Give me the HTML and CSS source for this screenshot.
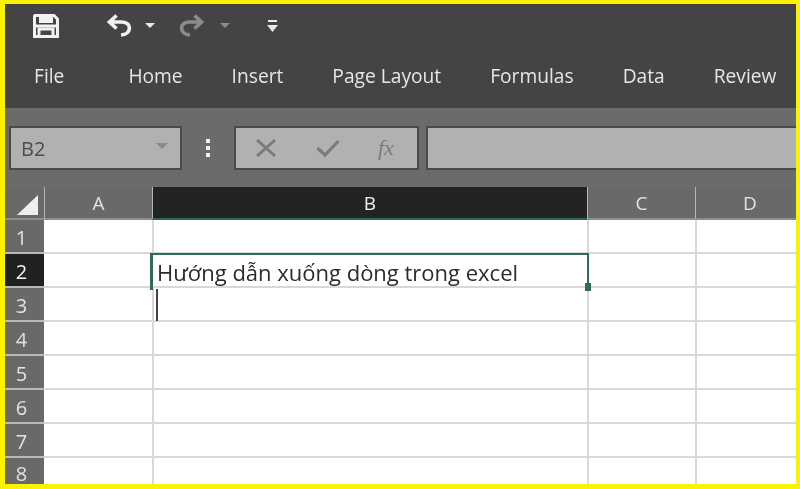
FILE: index.html
```html
<!DOCTYPE html>
<html lang="vi">
<head>
<meta charset="utf-8">
<title>Excel</title>
<link rel="stylesheet" href="styles.css">
</head>
<body>
<div class="frame">
  <header class="ribbon">
    <div class="qat">
      <svg class="ico-save" width="26" height="24" viewBox="0 0 26 24"><path d="M2 1.500H21L24.500 5V22.500H1.500V2Z" fill="none" stroke="#f2f2f2" stroke-width="3"/><rect x="6" y="2" width="14" height="7" fill="#f2f2f2"/><path d="M6 22V15H20V22" fill="none" stroke="#f2f2f2" stroke-width="3"/><rect x="2" y="10.500" width="22" height="3" fill="#f2f2f2"/></svg>
      <svg class="ico-undo" width="25" height="23" viewBox="0 0 25 23"><path d="M9.500 1.500L2.500 8L9.500 14.500M3 8H15C25.500 8 24.500 21 14 21" fill="none" stroke="#f0f0f0" stroke-width="3.600"/></svg>
      <span class="drop drop-on"></span>
      <svg class="ico-redo" width="25" height="23" viewBox="0 0 25 23"><path d="M15.500 1.500L22.500 8L15.500 14.500M22 8H10C-0.500 8 0.500 21 11 21" fill="none" stroke="#8b8b8b" stroke-width="3.600"/></svg>
      <span class="drop drop-off"></span>
      <svg class="ico-more" width="11" height="12" viewBox="0 0 11 12"><rect x="1" y="0" width="9" height="2" fill="#e8e8e8"/><path d="M0 5H11L5.500 12Z" fill="#e8e8e8"/></svg>
    </div>
    <nav class="tabs">
      <span class="tab tab-file">File</span>
      <span class="tab">Home</span>
      <span class="tab">Insert</span>
      <span class="tab">Page Layout</span>
      <span class="tab">Formulas</span>
      <span class="tab">Data</span>
      <span class="tab">Review</span>
    </nav>
  </header>
  <section class="fbar">
    <div class="namebox"><span>B2</span><i class="name-drop"></i></div>
    <div class="grip"><i></i><i></i><i></i></div>
    <div class="fbtns">
      <svg width="22" height="18" viewBox="0 0 22 18"><path d="M2 1L20 17M20 1L2 17" stroke="#7b7b7b" stroke-width="3" fill="none"/></svg>
      <svg width="24" height="18" viewBox="0 0 24 18"><path d="M1.500 9L9 16L22.500 2" stroke="#7b7b7b" stroke-width="3.200" fill="none"/></svg>
      <span class="fx">fx</span>
    </div>
    <div class="finput"></div>
  </section>
  <section class="sheet">
    <div class="ch corner"><svg width="22" height="21" viewBox="0 0 22 21"><path d="M21 0V20H0Z" fill="#efefef"/></svg></div>
    <div class="ch">A</div>
    <div class="ch ch-on">B</div>
    <div class="ch">C</div>
    <div class="ch ch-last">D</div>

    <div class="rh">1</div><div class="c"></div><div class="c"></div><div class="c"></div><div class="c"></div>
    <div class="rh rh-on">2</div><div class="c"></div><div class="c c-sel">Hướng dẫn xuống dòng trong excel<i class="handle"></i></div><div class="c"></div><div class="c"></div>
    <div class="rh">3</div><div class="c"></div><div class="c"><i class="caret"></i></div><div class="c"></div><div class="c"></div>
    <div class="rh">4</div><div class="c"></div><div class="c"></div><div class="c"></div><div class="c"></div>
    <div class="rh">5</div><div class="c"></div><div class="c"></div><div class="c"></div><div class="c"></div>
    <div class="rh">6</div><div class="c"></div><div class="c"></div><div class="c"></div><div class="c"></div>
    <div class="rh">7</div><div class="c"></div><div class="c"></div><div class="c"></div><div class="c"></div>
    <div class="rh rh-cut"><span>8</span></div><div class="c"></div><div class="c"></div><div class="c"></div><div class="c"></div>
  </section>
</div>
</body>
</html>
```
FILE: styles.css
```css
* { box-sizing: border-box; }
html, body { margin: 0; height: 100%; }
body { background: #fff; overflow: hidden; }

.frame {
  width: 800px;
  height: 489px;
  border-style: solid;
  border-color: #fbf200;
  border-width: 4px 4px 5px 5px;
  display: flex;
  flex-direction: column;
  overflow: hidden;
  font-family: "Open Sans", "Noto Sans", sans-serif;
  filter: blur(0.5px);
}

/* ribbon */
.ribbon {
  height: 104px;
  flex: none;
  background: #444;
  display: flex;
  flex-direction: column;
}
.qat {
  height: 42px;
  padding: 10px 0 0 28px;
  display: flex;
  align-items: flex-start;
}
.ico-undo { margin-left: 48px; }
.drop {
  width: 0;
  height: 0;
  border-style: solid;
  border-width: 5px 5px 0;
  border-color: transparent;
  margin-top: 9px;
}
.drop-on { border-top-color: #e8e8e8; margin-left: 13px; }
.drop-off { border-top-color: #8b8b8b; margin-left: 16px; }
.ico-redo { margin-left: 24px; }
.ico-more { margin-left: 37px; margin-top: 6px; }

.tabs {
  padding-left: 29px;
  display: flex;
  gap: 49px;
  color: #e6e6e6;
  font-size: 19.200px;
  font-weight: 500;
  line-height: 24px;
  margin-top: 18px;
}
.tab-file { margin-right: 15px; }

/* formula bar */
.fbar {
  height: 79px;
  flex: none;
  background: #6b6b6b;
  padding: 18px 0 0 4px;
  display: flex;
  align-items: flex-start;
}
.namebox {
  width: 173px;
  height: 44px;
  background: #b1b1b1;
  border: 2px solid #4a4a4a;
  display: flex;
  align-items: center;
  justify-content: space-between;
  padding: 0 12px 0 10px;
  color: #4c4c4c;
  font-size: 20px;
}
.name-drop {
  width: 0;
  height: 0;
  border-style: solid;
  border-width: 6px 6px 0;
  border-color: #8a8a8a transparent transparent;
  margin-bottom: 4px;
}
.grip {
  width: 52px;
  height: 44px;
  display: flex;
  flex-direction: column;
  align-items: center;
  justify-content: center;
  gap: 3px;
}
.grip i { width: 4px; height: 4px; background: #f0f0f0; }
.fbtns {
  width: 185px;
  height: 44px;
  background: #b1b1b1;
  border: 2px solid #4a4a4a;
  display: flex;
  align-items: center;
  padding-left: 19px;
  gap: 39px;
}
.fx {
  font-family: "Liberation Serif", serif;
  font-style: italic;
  font-size: 22px;
  color: #7b7b7b;
  margin-left: -1px;
}
.finput {
  flex: 1;
  height: 44px;
  margin-left: 7px;
  background: #b1b1b1;
  border: 2px solid #4a4a4a;
  border-right: 0;
}

/* sheet */
.sheet {
  flex: 1;
  display: grid;
  grid-template-columns: 39px 108px 435px 108px 1fr;
  grid-template-rows: 33px repeat(7, 34px) 1fr;
  background: #fff;
}
.ch {
  background: #696969;
  color: #e2e2e2;
  font-size: 19px;
  font-weight: 500;
  border-left: 1.500px solid #b5b5b5;
  border-bottom: 2px solid #8d8d8d;
  display: flex;
  align-items: center;
  justify-content: center;
}
.ch-last { padding-left: 8px; }
.corner {
  border-left: 0;
  border-right: 0;
  justify-content: flex-start;
  padding: 5px 0 0 12px;
}
.ch-on {
  background: #232323;
  color: #f2f2f2;
  border-bottom: 2px solid #2a6a50;
}
.rh {
  background: #696969;
  color: #e2e2e2;
  font-size: 20px;
  font-weight: 500;
  padding: 2px 6px 0 0;
  border-bottom: 2px solid #b9b9b9;
  display: flex;
  align-items: center;
  justify-content: center;
}
.rh-on { background: #1f2220; color: #f2f2f2; }
.rh-cut { border-bottom: 0; align-items: flex-start; overflow: hidden; padding-top: 2px; }
.c {
  position: relative;
  border-left: 2px solid #d8d8d8;
  border-bottom: 2px solid #d8d8d8;
  font-size: 22px;
  color: #2b2b2b;
  white-space: nowrap;
}
.c:nth-child(5n + 2) { border-left: 0; }
.c-sel {
  border-top: 2px solid #2f6b55;
  border-left: 3px solid #2f6b55;
  border-right: 2px solid #2f6b55;
  border-bottom: 2px solid #d8d8d8;
  margin: -1px -2px 0 -2px;
  padding-left: 4px;
  line-height: 34px;
  z-index: 1;
}
.c-sel::after {
  content: "";
  position: absolute;
  left: -3px;
  bottom: -4px;
  width: 3px;
  height: 4px;
  background: #2f6b55;
}
.handle {
  position: absolute;
  right: -4px;
  bottom: -5px;
  width: 6px;
  height: 8px;
  background: #2f6b55;
}
.caret {
  position: absolute;
  left: 2px;
  top: 1px;
  width: 2px;
  height: 32px;
  background: #444;
}
```
